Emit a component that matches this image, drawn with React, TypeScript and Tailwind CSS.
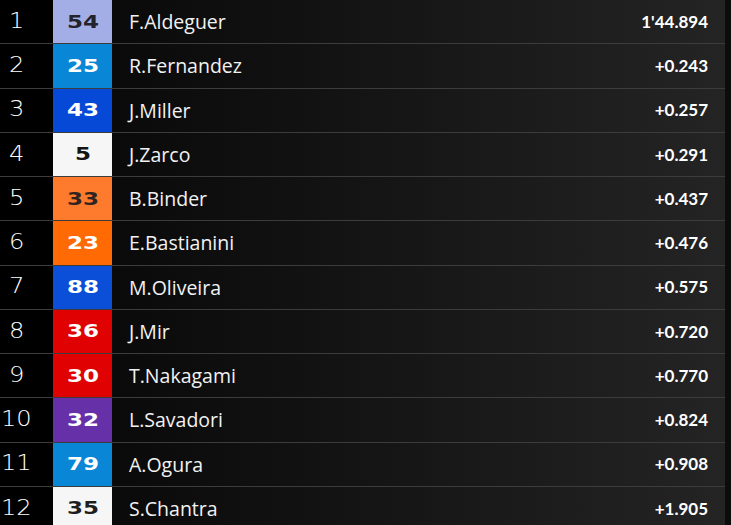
import React from 'react'

type Rider = {
  pos: number
  num: string
  name: string
  time: string
  bg: string
  fg: string
}

const riders: Rider[] = [
  { pos: 1, num: '54', name: 'F.Aldeguer', time: "1'44.894", bg: 'bg-[#a3ade6]', fg: 'text-[#23232b]' },
  { pos: 2, num: '25', name: 'R.Fernandez', time: '+0.243', bg: 'bg-[#0a86d6]', fg: 'text-white' },
  { pos: 3, num: '43', name: 'J.Miller', time: '+0.257', bg: 'bg-[#0649d6]', fg: 'text-white' },
  { pos: 4, num: '5', name: 'J.Zarco', time: '+0.291', bg: 'bg-[#f6f6f6]', fg: 'text-[#141414]' },
  { pos: 5, num: '33', name: 'B.Binder', time: '+0.437', bg: 'bg-[#fe7a2c]', fg: 'text-[#2f2420]' },
  { pos: 6, num: '23', name: 'E.Bastianini', time: '+0.476', bg: 'bg-[#ff6a05]', fg: 'text-white' },
  { pos: 7, num: '88', name: 'M.Oliveira', time: '+0.575', bg: 'bg-[#0b4ed8]', fg: 'text-white' },
  { pos: 8, num: '36', name: 'J.Mir', time: '+0.720', bg: 'bg-[#e00202]', fg: 'text-white' },
  { pos: 9, num: '30', name: 'T.Nakagami', time: '+0.770', bg: 'bg-[#e00202]', fg: 'text-white' },
  { pos: 10, num: '32', name: 'L.Savadori', time: '+0.824', bg: 'bg-[#6630a8]', fg: 'text-white' },
  { pos: 11, num: '79', name: 'A.Ogura', time: '+0.908', bg: 'bg-[#0a86d6]', fg: 'text-white' },
  { pos: 12, num: '35', name: 'S.Chantra', time: '+1.905', bg: 'bg-[#f6f6f6]', fg: 'text-[#1e1e1e]' },
]

const Row = ({ r }: { r: Rider }) => (
  <div className="flex h-[44.25px] box-border border-b border-[#3c3c3c]">
    {/* position */}
    <div className="w-[53px] shrink-0 bg-black flex items-center justify-center pr-[20px] text-[21px] font-extralight text-white [font-family:'DejaVu_Sans_Light','DejaVu_Sans',sans-serif]">
      <span className="inline-block scale-x-[1.15]">{r.pos}</span>
    </div>

    {/* rider number */}
    <div className={`w-[59px] shrink-0 ${r.bg} ${r.fg} flex items-center justify-center text-[20px] font-black [font-family:'DejaVu_Sans',sans-serif]`}>
      <span className="inline-block scale-x-[1.15] scale-y-[0.92]">{r.num}</span>
    </div>

    {/* name + gap */}
    <div className="flex-1 flex items-center justify-between pl-[17px] pr-[17px] bg-linear-to-r from-[#0a0a0a] to-[#242424]">
      <span className="text-[19.5px] font-medium text-[#f2f2f2] [font-family:'Open_Sans',sans-serif]">{r.name}</span>
      <span className="text-[17px] font-bold text-white [font-family:Lato,sans-serif]">{r.time}</span>
    </div>
  </div>
)

export default function App() {
  return (
    <div className="w-[731px] h-[525px] overflow-hidden bg-[#0c0c0c] flex">
      <div className="w-[725px]">
        {riders.map((r) => (
          <Row key={r.pos} r={r} />
        ))}
      </div>
    </div>
  )
}
